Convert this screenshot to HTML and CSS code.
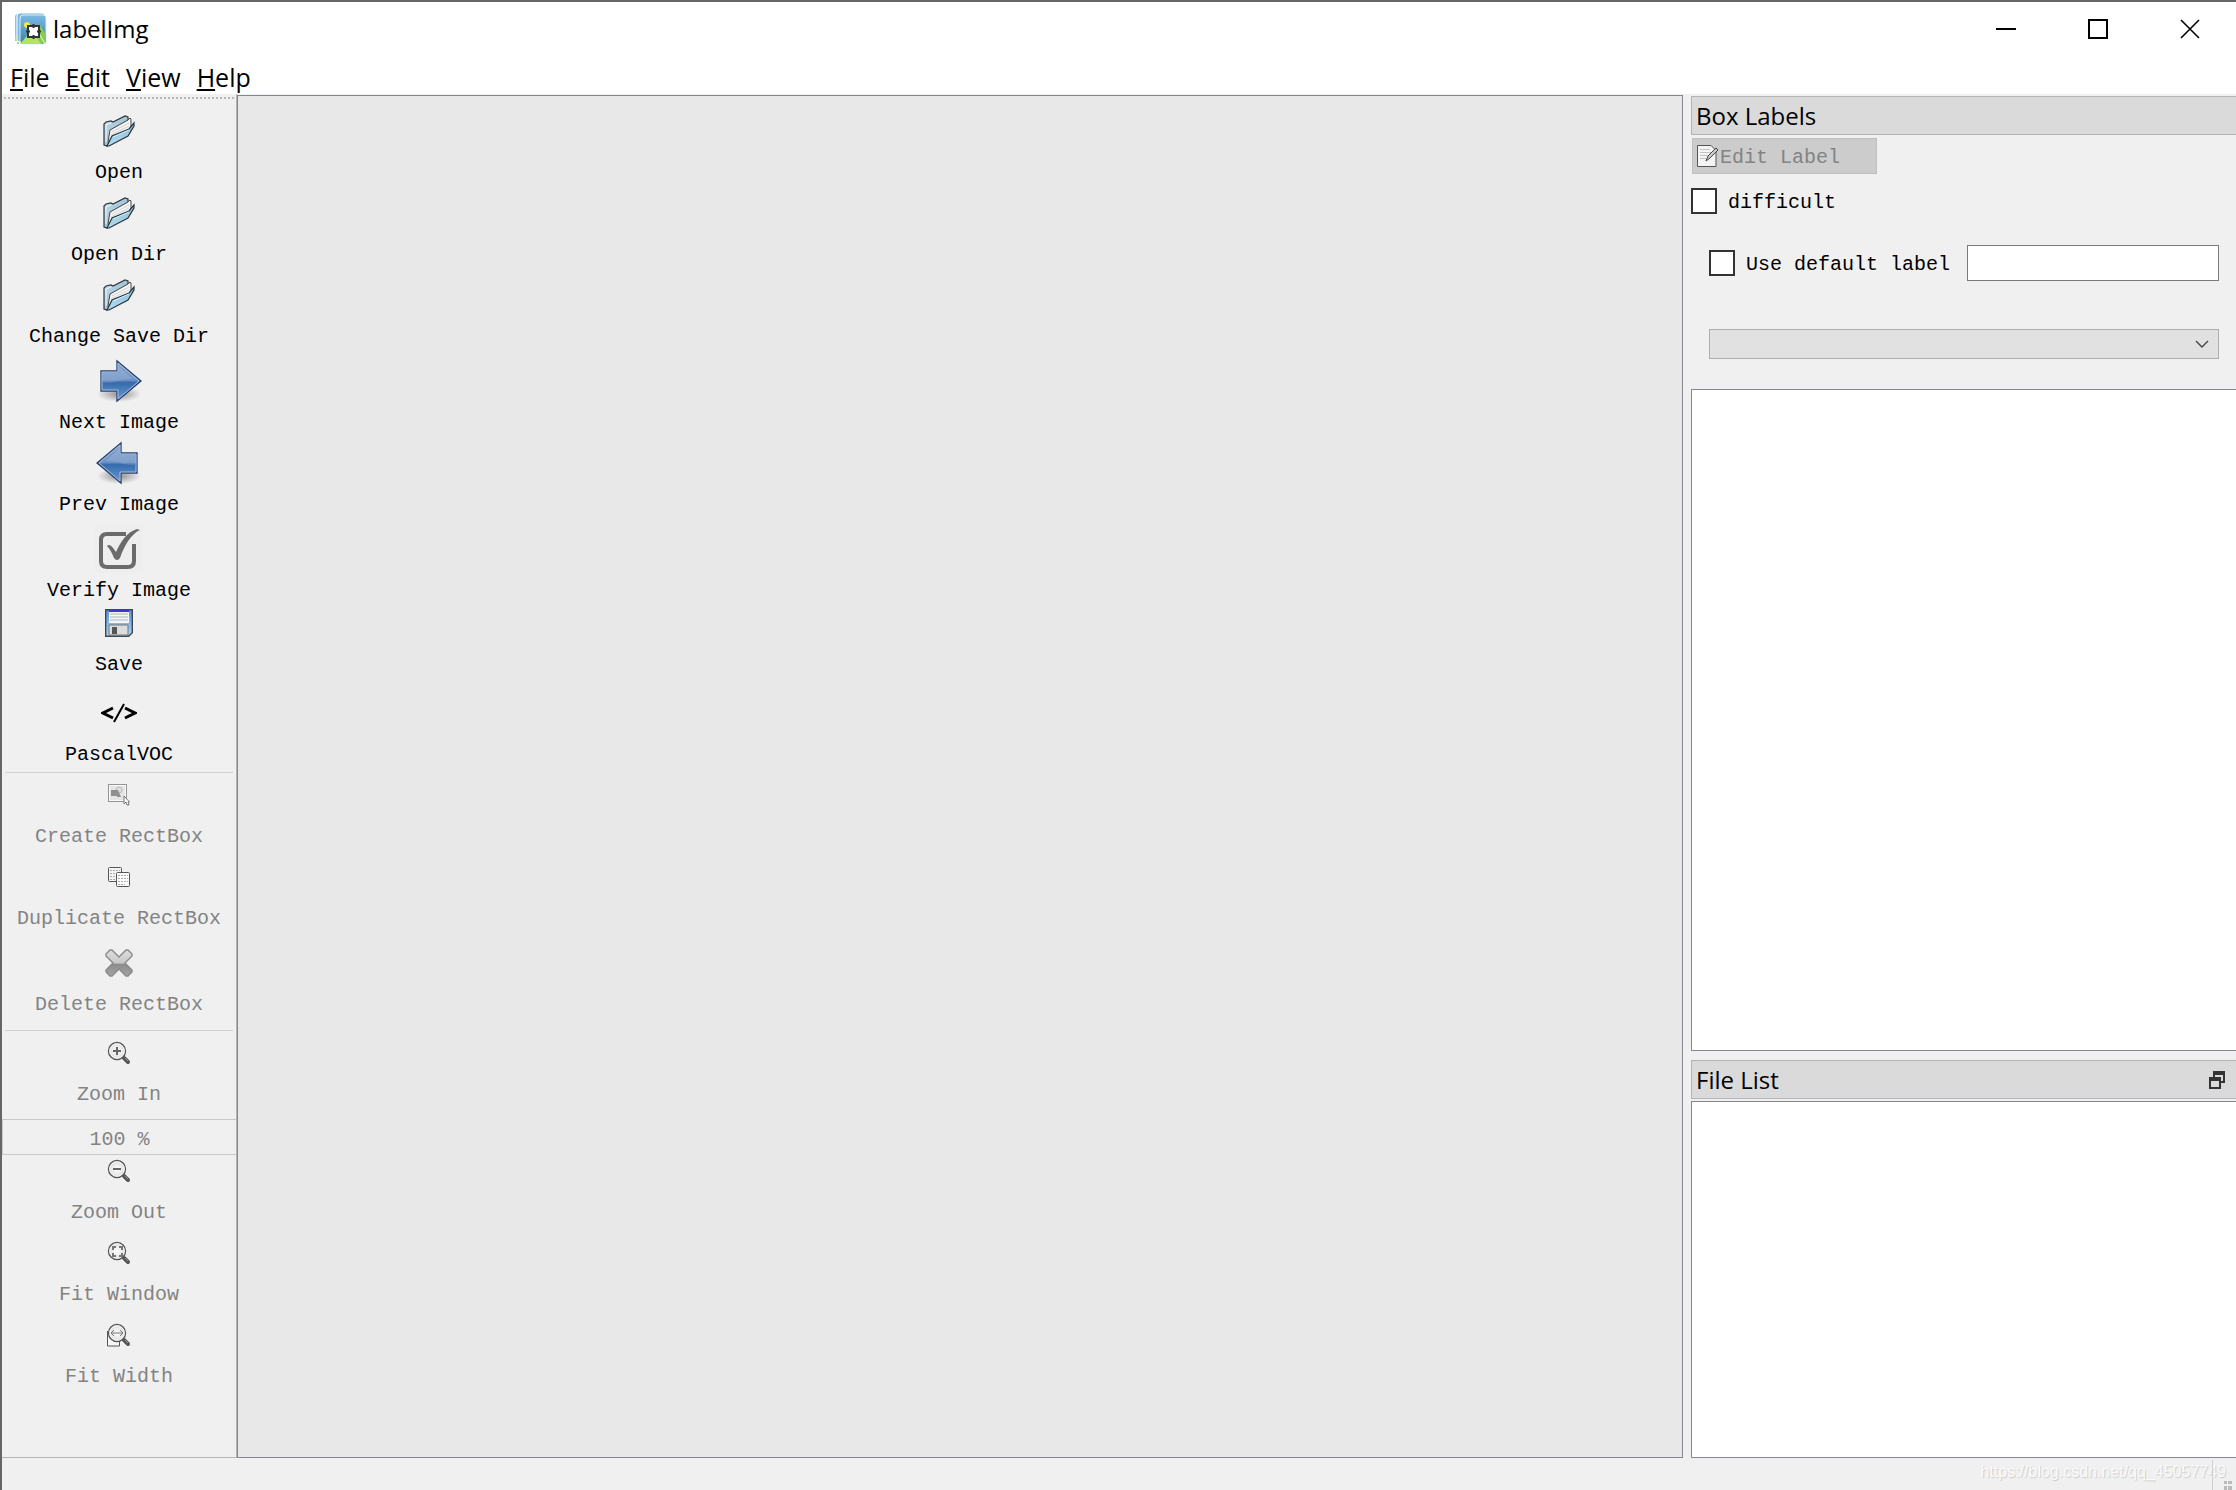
FILE: index.html
```html
<!DOCTYPE html>
<html lang="en">

<head>
    <meta charset="UTF-8" />
    <meta name="viewport" content="width=device-width, initial-scale=1.0" />
    <title>labelImg</title>
    <link rel="stylesheet" href="styles.css">
</head>

<body>
    <!-- Shared icon shapes -->
    <svg class="defs" width="0" height="0" aria-hidden="true">
        <defs>
            <linearGradient id="folderBack" x1="0" y1="0" x2="1" y2="1">
                <stop offset="0" stop-color="#c9e0ed" />
                <stop offset="1" stop-color="#7fa9c0" />
            </linearGradient>
            <linearGradient id="folderFront" x1="0" y1="0" x2="0" y2="1">
                <stop offset="0" stop-color="#86bcd9" />
                <stop offset="1" stop-color="#b4ddf0" />
            </linearGradient>
            <linearGradient id="arrowFill" x1="0" y1="0" x2="0" y2="1">
                <stop offset="0" stop-color="#8aa6cf" />
                <stop offset="0.48" stop-color="#6f93c6" />
                <stop offset="0.54" stop-color="#366bac" />
                <stop offset="1" stop-color="#6a9bd3" />
            </linearGradient>
            <radialGradient id="arrowShadow">
                <stop offset="0" stop-color="#000" stop-opacity="0.4" />
                <stop offset="1" stop-color="#000" stop-opacity="0" />
            </radialGradient>
            <linearGradient id="diskFill" x1="0" y1="0" x2="0" y2="1">
                <stop offset="0" stop-color="#5b93d8" />
                <stop offset="1" stop-color="#a9d8f4" />
            </linearGradient>
            <linearGradient id="crossFill" x1="0" y1="0" x2="0" y2="1">
                <stop offset="0" stop-color="#dedede" />
                <stop offset="0.5" stop-color="#c8c8c8" />
                <stop offset="0.55" stop-color="#8c8c8c" />
                <stop offset="1" stop-color="#a4a4a4" />
            </linearGradient>
            <linearGradient id="logoSky" x1="0" y1="0" x2="0" y2="1">
                <stop offset="0" stop-color="#7cb9e4" />
                <stop offset="1" stop-color="#3f83a6" />
            </linearGradient>
            <radialGradient id="lensFill">
                <stop offset="0" stop-color="#fff" />
                <stop offset="1" stop-color="#dcdcdc" />
            </radialGradient>
            <symbol id="folder" viewBox="0 0 32 32">
                <path d="M1 30V9l2-2 5-1 2 1L22 1l3 1v3l-1 14L4 31z" fill="url(#folderBack)" stroke="#2e383e" stroke-width="1.200" />
                <path d="M5 27L7 15 25 5l2-2 1 1v11L6 29z" fill="#f4f4f4" stroke="#444" />
                <path d="M9 17l17-9M8 20l18-9" fill="none" stroke="#d4d4d4" />
                <path d="M4 31L9 21 26 14l5-6v3l-6 10L6 31z" fill="url(#folderFront)" stroke="#26343c" stroke-width="1.200" />
                <path d="M3 27V10l5-2" fill="none" stroke="#eef6fa" />
                <path d="M10 22l16-7" fill="none" stroke="#d8eef8" />
            </symbol>
            <symbol id="arrow" viewBox="0 0 48 48">
                <ellipse cx="24" cy="37" rx="22" ry="8" fill="url(#arrowShadow)" />
                <path d="M6 14h16V4l24 20-24 20V34H6z" fill="url(#arrowFill)" stroke="#27416f" stroke-width="1.300" />
                <path d="M7 15h16V6l21 18-21 18V33H7z" fill="none" stroke="#a7bddd" />
                <path d="M8 26c12 1 16-5 30-4l-14-12v6H8z" fill="#fff" opacity="0.120" />
            </symbol>
            <symbol id="lens" viewBox="0 0 24 24">
                <path d="M16 17l6 5" stroke="#fff" stroke-width="6" opacity="0.5" />
                <path d="M15 15l3 3" stroke="#777" stroke-width="2" />
                <path d="M17 17l4 4" stroke="#555" stroke-width="4" stroke-linecap="round" />
                <path d="M18 17l3 3" stroke="#999" />
                <circle cx="10" cy="10" r="8.500" fill="url(#lensFill)" stroke="#555" stroke-width="1.400" />
                <circle cx="10" cy="10" r="7.300" fill="none" stroke="#f8f8f8" />
            </symbol>
        </defs>
    </svg>

    <header class="titlebar">
        <svg class="logo" width="32" height="32" viewBox="0 0 32 32" aria-hidden="true">
            <rect x="0" y="1" width="26" height="26" rx="3" fill="#8cc4e6" />
            <path d="M1 23v6M3 26v5" stroke="#a9df5e" stroke-width="2" stroke-dasharray="2 1" />
            <rect x="2" y="0" width="28" height="29" rx="3" fill="#7cb8e0" stroke="#fff" />
            <rect x="5" y="2" width="26" height="29" rx="3" fill="url(#logoSky)" stroke="#d8ecf8" />
            <circle cx="12" cy="12" r="3" fill="#f7e92e" />
            <path d="M22 16l3-4 6 10v6q0 3-3 3h-8z" fill="#86cc50" />
            <path d="M5 31l12-14 9 14z" fill="#b2e55f" />
            <path d="M22 17l8 14" stroke="#eef9df" />
            <path d="M13 13h11v11H13z" fill="#fff" stroke="#333" stroke-width="2" />
            <path d="M18.500 11v4M18.500 22v4M11 18.500h4M22 18.500h4" stroke="#333" stroke-width="2" />
        </svg>
        <h1>labelImg</h1>
        <div class="window-buttons">
            <button type="button" aria-label="Minimize">
                <svg width="20" height="20" viewBox="0 0 20 20"><path d="M0 10h20" stroke="#000" stroke-width="2" /></svg>
            </button>
            <button type="button" aria-label="Maximize">
                <svg width="20" height="20" viewBox="0 0 20 20"><path d="M1 1h18v18H1z" fill="none" stroke="#000" stroke-width="2" /></svg>
            </button>
            <button type="button" aria-label="Close">
                <svg width="20" height="20" viewBox="0 0 20 20"><path d="M1 1l18 18M19 1L1 19" stroke="#000" stroke-width="1.600" /></svg>
            </button>
        </div>
    </header>

    <nav class="menubar">
        <a href="#"><u>F</u>ile</a>
        <a href="#"><u>E</u>dit</a>
        <a href="#"><u>V</u>iew</a>
        <a href="#"><u>H</u>elp</a>
    </nav>

    <main class="workspace">
        <div class="toolbar">
            <div class="handle"></div>
            <button type="button" class="tool">
                <span class="icon"><svg width="32" height="32"><use href="#folder" /></svg></span>
                Open
            </button>
            <button type="button" class="tool">
                <span class="icon"><svg width="32" height="32"><use href="#folder" /></svg></span>
                Open Dir
            </button>
            <button type="button" class="tool">
                <span class="icon"><svg width="32" height="32"><use href="#folder" /></svg></span>
                Change Save Dir
            </button>
            <button type="button" class="tool large">
                <span class="icon"><svg width="48" height="48"><use href="#arrow" /></svg></span>
                Next Image
            </button>
            <button type="button" class="tool">
                <span class="icon flip"><svg width="48" height="48"><use href="#arrow" /></svg></span>
                Prev Image
            </button>
            <button type="button" class="tool large">
                <span class="icon">
                    <svg width="48" height="48" viewBox="0 0 48 48">
                        <rect width="48" height="48" fill="#eee" />
                        <path d="M31 9H12q-6 0-6 6v21q0 6 6 6h21q6 0 6-6V19" fill="none" stroke="#6b6b6b" stroke-width="4" />
                        <path d="M12 21c3-3 6 2 9 6C26 16 32 7 42 4l3 1c-9 4-16 16-20 28q-3 4-6 0c-2-5-4-9-7-12z" fill="#6b6b6b" />
                    </svg>
                </span>
                Verify Image
            </button>
            <button type="button" class="tool small">
                <span class="icon">
                    <svg width="28" height="28" viewBox="0 0 28 28">
                        <path d="M0.700 0.700h26.600v23l-3.600 3.600H0.700z" fill="url(#diskFill)" stroke="#3d4654" stroke-width="1.400" />
                        <path d="M4 1h20v13H4z" fill="#f4f4f4" />
                        <path d="M4 2h20" stroke="#3b36d6" stroke-width="2" />
                        <path d="M5 5h18M5 8h18M5 11h18" stroke="#aab4c0" />
                        <path d="M4 16h19v10H4z" fill="#ddd" stroke="#777" />
                        <path d="M7 18h5v7H7z" fill="#555" />
                    </svg>
                </span>
                Save
            </button>
            <button type="button" class="tool format">
                <span class="icon">
                    <svg width="36" height="20" viewBox="0 0 36 20">
                        <path d="M12 5L2 10l10 5M24 5l10 5-10 5" fill="none" stroke="#000" stroke-width="3" />
                        <path d="M23 1L13 19" stroke="#000" stroke-width="2" />
                    </svg>
                </span>
                PascalVOC
            </button>
            <hr>
            <button type="button" class="tool small" disabled>
                <span class="icon">
                    <svg width="22" height="22" viewBox="0 0 22 22">
                        <path d="M0.500 0.500h18v17h-18z" fill="#fafafa" stroke="#333" stroke-dasharray="1 1" />
                        <path d="M2 2h15v14H2z" fill="#e4e4e4" />
                        <circle cx="11" cy="6" r="3" fill="#ddd" stroke="#bbb" />
                        <path d="M3 6h7l3 7H9v-1H3z" fill="#909090" />
                        <path d="M16 12v8l2-2 1 3h2l-1-3h1.500z" fill="#fff" stroke="#777" />
                    </svg>
                </span>
                Create RectBox
            </button>
            <button type="button" class="tool" disabled>
                <span class="icon">
                    <svg width="22" height="20" viewBox="0 0 22 20">
                        <rect x="0.500" y="0.500" width="13" height="14" rx="1" fill="#f4f4f4" stroke="#555" />
                        <path d="M2 3.500h10M2 6.500h6M2 9.500h6M2 12.500h5" stroke="#aaa" stroke-dasharray="2 1" />
                        <rect x="8.500" y="5.500" width="13" height="14" rx="1" fill="#fbfbfb" stroke="#555" />
                        <path d="M10 8.500h10M10 11.500h10M10 14.500h10M10 17.500h7" stroke="#aaa" stroke-dasharray="2 1" />
                    </svg>
                </span>
                Duplicate RectBox
            </button>
            <button type="button" class="tool large" disabled>
                <span class="icon">
                    <svg width="28" height="28" viewBox="0 0 28 28">
                        <path d="M5 1h2l7 7 7-7h2l4 4v2l-7 7 7 7v2l-4 4h-2l-7-7-7 7H5l-4-4v-2l7-7-7-7V5z" fill="url(#crossFill)" stroke="#8a8a8a" stroke-width="1.400" />
                    </svg>
                </span>
                Delete RectBox
            </button>
            <hr class="spaced">
            <button type="button" class="tool small" disabled>
                <span class="icon">
                    <svg width="24" height="24" viewBox="0 0 24 24"><use href="#lens" /><path d="M6 10h8M10 6v8" stroke="#666" stroke-width="2" /></svg>
                </span>
                Zoom In
            </button>
            <input class="zoom-value" type="text" value="100 %" aria-label="Zoom level" disabled>
            <button type="button" class="tool tight" disabled>
                <span class="icon">
                    <svg width="24" height="24" viewBox="0 0 24 24"><use href="#lens" /><path d="M6 10h8" stroke="#666" stroke-width="2" /></svg>
                </span>
                Zoom Out
            </button>
            <button type="button" class="tool" disabled>
                <span class="icon">
                    <svg width="24" height="24" viewBox="0 0 24 24"><use href="#lens" /><path d="M6 9V6h3M12 6h3v3M15 12v3h-3M9 15H6v-3" fill="none" stroke="#777" stroke-width="2" /></svg>
                </span>
                Fit Window
            </button>
            <button type="button" class="tool" disabled>
                <span class="icon">
                    <svg width="24" height="24" viewBox="0 0 24 24">
                        <path d="M0.500 8v15h12v-8" fill="#f8f8f8" stroke="#555" />
                        <use href="#lens" />
                        <path d="M4 10h12M7 7l-3 3 3 3M13 7l3 3-3 3" fill="none" stroke="#777" />
                    </svg>
                </span>
                Fit Width
            </button>
        </div>

        <div class="canvas"></div>

        <aside class="docks">
            <section class="dock box-labels">
                <h2>Box Labels</h2>
                <div class="dock-body">
                    <button type="button" class="edit-label" disabled>
                        <svg width="22" height="24" viewBox="0 0 22 24" aria-hidden="true">
                            <path d="M1.500 1.500H15l5 5v16H1.500z" fill="#f4f4f4" stroke="#555" />
                            <path d="M4 5.500h10M4 8.500h11M4 11.500h9M4 14.500h6" stroke="#c4c4c4" />
                            <path d="M10 17l2-5 8-8 2 2-8 8z" fill="#ccc" stroke="#444" />
                        </svg>
                        <span class="text">Edit Label</span>
                    </button>
                    <label class="check"><input type="checkbox"> <span class="text">difficult</span></label>
                    <div class="default-label">
                        <label class="check"><input type="checkbox"> <span class="text">Use default label</span></label>
                        <input class="label-text" type="text" aria-label="Default label">
                    </div>
                    <div class="combo">
                        <select aria-label="Label filter">
                            <option></option>
                        </select>
                        <svg width="14" height="8" viewBox="0 0 14 8" aria-hidden="true"><path d="M1 1l6 6 6-6" fill="none" stroke="#444" stroke-width="1.400" /></svg>
                    </div>
                </div>
                <div class="list"></div>
            </section>
            <section class="dock file-list">
                <h2>File List
                    <button type="button" aria-label="Float">
                        <svg width="16" height="18" viewBox="0 0 16 18">
                            <path d="M5 6V2h10v9h-3" fill="none" stroke="#333" stroke-width="2" />
                            <path d="M4 2h12" stroke="#333" stroke-width="4" />
                            <path d="M1 7h10v10H1z" fill="#dadada" stroke="#333" stroke-width="2" />
                            <path d="M0 8h12" stroke="#333" stroke-width="4" />
                        </svg>
                    </button>
                </h2>
                <div class="list"></div>
            </section>
        </aside>
    </main>

    <footer class="statusbar">
        <span class="watermark">https://blog.csdn.net/qq_45057749</span>
        <svg class="grip" width="24" height="30" viewBox="0 0 24 30" aria-hidden="true">
            <path d="M0.500 0v30" stroke="#d0d0d0" />
            <path d="M12 21h3v3h-3zM16 21h4v3h-4zM12 26h3v4h-3zM16 26h4v4h-4z" fill="#bbb" />
        </svg>
    </footer>
</body>

</html>
```
FILE: styles.css
```css
/* Reset CSS */
* {
    margin: 0;
    padding: 0;
    box-sizing: border-box;
}

/* Global Styles */
body {
    display: flex;
    flex-direction: column;
    height: 100vh;
    border-top: 2px solid #666;
    border-left: 2px solid #666;
    font-family: "Open Sans", "Noto Sans", sans-serif;
    font-size: 24px;
    background-color: #f0f0f0;
    color: #000;
    overflow: hidden;
}

button,
input,
select,
label {
    font-family: "Liberation Mono", monospace;
    font-size: 20px;
    line-height: 24px;
    color: #000;
}

button {
    border: none;
    background: none;
}

button:disabled,
input:disabled {
    color: #838383;
}

svg {
    display: block;
    flex: none;
}

.defs {
    position: absolute;
}

/* Title bar and menu */
.titlebar {
    display: flex;
    align-items: center;
    height: 54px;
    padding-left: 13px;
    background-color: #fff;
}

.titlebar h1 {
    margin-left: 6px;
    padding-bottom: 2px;
    font-size: 24px;
    font-weight: 400;
}

.window-buttons {
    display: flex;
    margin-left: auto;
}

.window-buttons button {
    display: flex;
    align-items: center;
    justify-content: center;
    width: 92px;
    height: 54px;
}

.menubar {
    display: flex;
    gap: 16px;
    height: 38px;
    padding-left: 8px;
    font-size: 25px;
    line-height: 42px;
    background-color: #fff;
}

.menubar a {
    color: #000;
    text-decoration: none;
}

.menubar u {
    text-underline-offset: 2px;
    text-decoration-thickness: 2px;
}

/* Main area */
.workspace {
    display: grid;
    grid-template-columns: 235px 1fr 545px;
    flex: 1;
    min-height: 0;
}

.toolbar {
    display: flex;
    flex-direction: column;
    border-right: 1px solid #b4b4b4;
    border-bottom: 1px solid #b4b4b4;
}

.handle {
    height: 9px;
    margin: 0 2px;
    background: repeating-linear-gradient(90deg, #b8b8b8 0 2px, #f0f0f0 2px 4px) 0 3px / 100% 2px no-repeat;
}

.tool {
    display: flex;
    flex-direction: column;
    align-items: center;
    gap: 14px;
    padding-top: 12px;
    white-space: nowrap;
}

.tool.large {
    padding-top: 16px;
}

.tool.small {
    padding-top: 4px;
}

.tool.tight {
    padding-top: 0;
}

.tool.format {
    padding-top: 20px;
}

.icon {
    display: flex;
    align-items: center;
    justify-content: center;
    height: 32px;
}

.flip {
    transform: scaleX(-1);
}

hr {
    margin: 5px 3px 2px;
    border: none;
    border-top: 1px solid #d0d0d0;
}

hr.spaced {
    margin-top: 13px;
}

.zoom-value {
    width: 100%;
    height: 36px;
    margin-top: 12px;
    padding-top: 4px;
    border: 1px solid #c8c8c8;
    border-right: none;
    background: none;
    text-align: center;
}

.canvas {
    margin: 1px 8px 0 0;
    border: 1px solid #828790;
    background-color: #e8e8e8;
}

/* Docks */
.docks {
    display: flex;
    flex-direction: column;
    gap: 9px;
    padding-top: 2px;
}

.dock {
    display: flex;
    flex-direction: column;
}

.box-labels {
    flex: 955;
}

.file-list {
    flex: 398;
}

.dock h2 {
    display: flex;
    align-items: center;
    justify-content: space-between;
    height: 39px;
    padding: 0 11px 0 4px;
    border: 1px solid #b4b4b4;
    border-right: none;
    background-color: #dadada;
    font-size: 24px;
    font-weight: 400;
}

.dock-body {
    display: flex;
    flex-direction: column;
    align-items: flex-start;
    padding: 3px 17px 30px 0;
}

.text {
    padding-top: 4px;
}

.edit-label {
    display: flex;
    align-items: center;
    gap: 2px;
    width: 185px;
    height: 36px;
    margin-left: 1px;
    padding-left: 3px;
    border: 1px solid #bfbfbf;
    background-color: #ccc;
}

.check {
    display: flex;
    align-items: center;
    gap: 11px;
    height: 26px;
    white-space: nowrap;
}

.check input {
    width: 26px;
    height: 26px;
    border: 2px solid #333;
    background-color: #fff;
    appearance: none;
}

.dock-body > .check {
    margin-top: 14px;
}

.default-label {
    display: flex;
    align-items: center;
    align-self: stretch;
    gap: 17px;
    margin: 31px 0 0 18px;
}

.label-text {
    flex: 1;
    min-width: 0;
    height: 36px;
    border: 1px solid #7a7a7a;
    background-color: #fff;
}

.combo {
    display: flex;
    align-items: center;
    align-self: stretch;
    height: 30px;
    margin: 48px 0 0 18px;
    padding-right: 9px;
    border: 1px solid #adadad;
    background-color: #e1e1e1;
}

.combo select {
    flex: 1;
    border: none;
    background: none;
    appearance: none;
}

.list {
    flex: 1;
    border: 1px solid #828790;
    border-right: none;
    background-color: #fff;
}

.file-list .list {
    margin-top: 2px;
}

/* Status bar */
.statusbar {
    display: flex;
    justify-content: flex-end;
    height: 32px;
    padding-top: 2px;
}

.watermark {
    margin-right: -14px;
    font-family: "Liberation Sans", sans-serif;
    font-size: 16px;
    line-height: 24px;
    color: #fafafa;
    text-shadow: 1px 1px 1px #ccc;
}
```
